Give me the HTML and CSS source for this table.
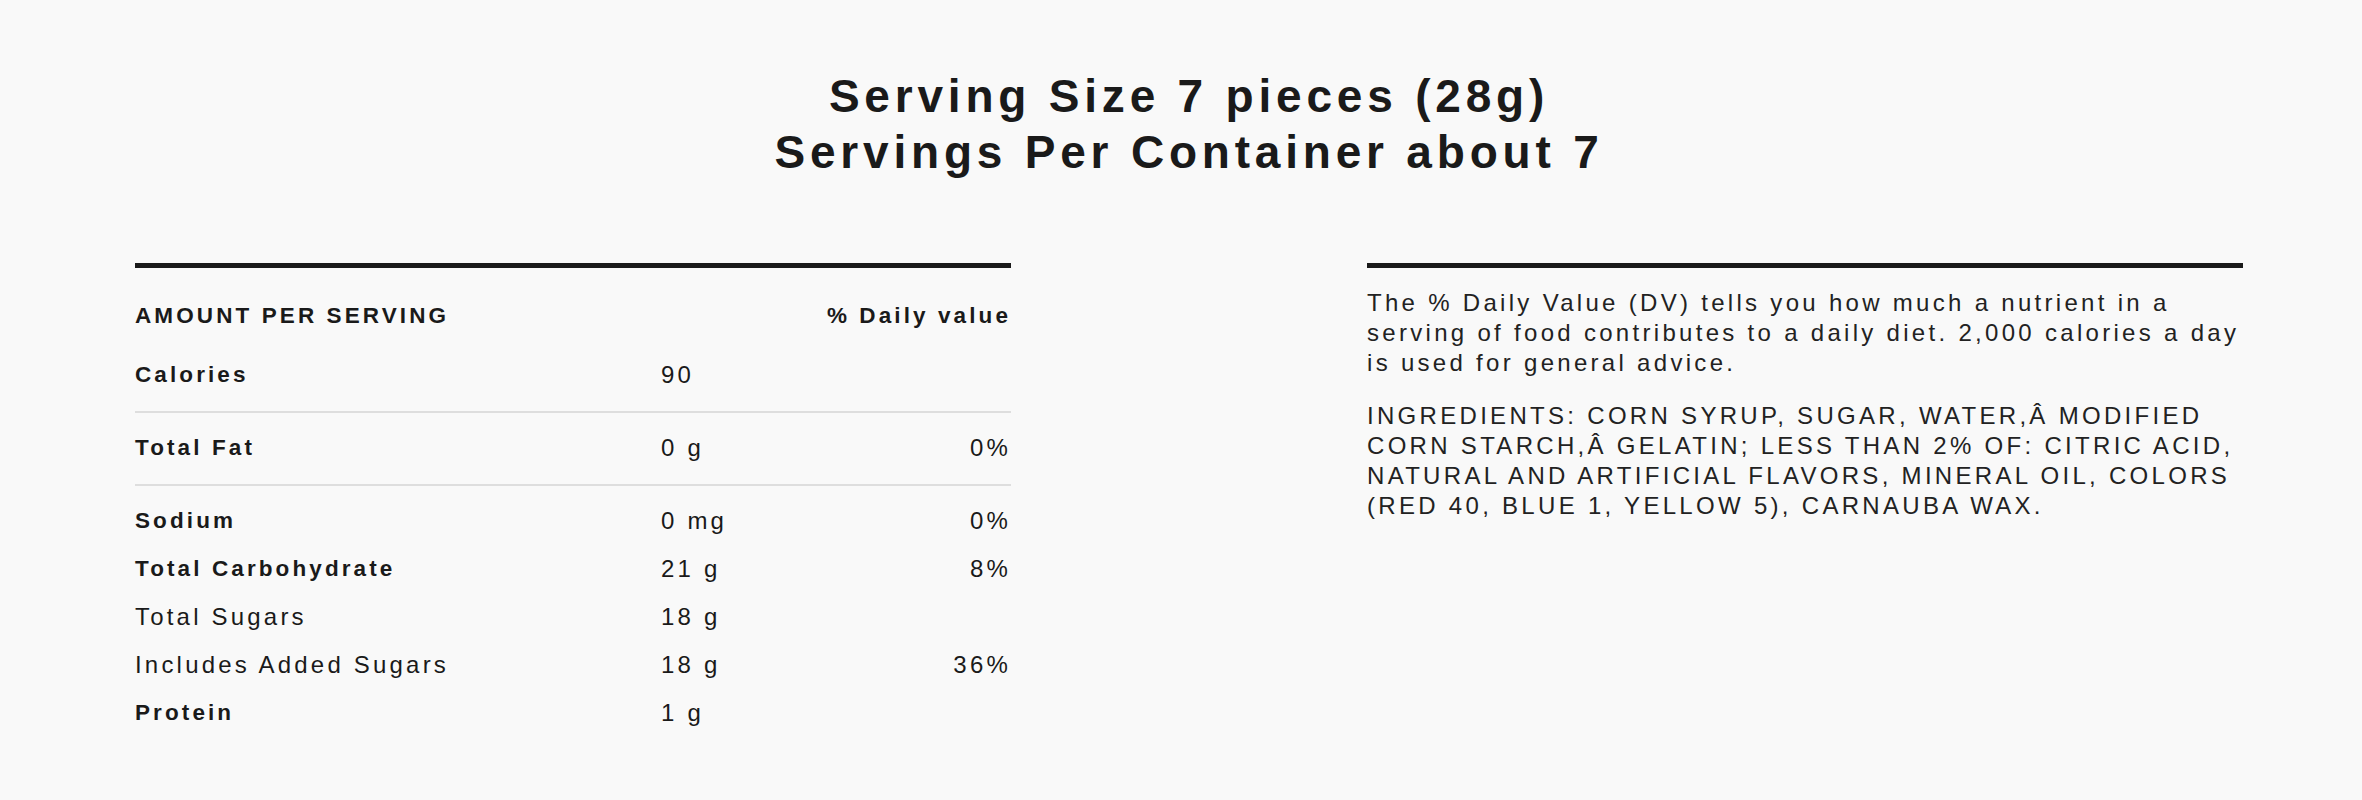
FILE: index.html
```html
<!DOCTYPE html>
<html lang="en">
<head>
<meta charset="utf-8">
<title>Nutrition Facts</title>
<link rel="stylesheet" href="styles.css">
</head>
<body>
<div class="page">
  <h1 class="title">Serving Size 7 pieces (28g)<br>Servings Per Container about 7</h1>
  <div class="columns">
    <section class="facts">
      <div class="row head">
        <span class="label">AMOUNT PER SERVING</span>
        <span class="val"></span>
        <span class="dv">% Daily value</span>
      </div>
      <div class="row divided">
        <span class="label">Calories</span>
        <span class="val">90</span>
        <span class="dv"></span>
      </div>
      <div class="row divided">
        <span class="label">Total Fat</span>
        <span class="val">0 g</span>
        <span class="dv">0%</span>
      </div>
      <div class="row">
        <span class="label">Sodium</span>
        <span class="val">0 mg</span>
        <span class="dv">0%</span>
      </div>
      <div class="row">
        <span class="label">Total Carbohydrate</span>
        <span class="val">21 g</span>
        <span class="dv">8%</span>
      </div>
      <div class="row">
        <span class="label sub">Total Sugars</span>
        <span class="val">18 g</span>
        <span class="dv"></span>
      </div>
      <div class="row">
        <span class="label sub">Includes Added Sugars</span>
        <span class="val">18 g</span>
        <span class="dv">36%</span>
      </div>
      <div class="row">
        <span class="label">Protein</span>
        <span class="val">1 g</span>
        <span class="dv"></span>
      </div>
    </section>
    <section class="notes">
      <p>The % Daily Value (DV) tells you how much a nutrient in a serving of food contributes to a daily diet. 2,000 calories a day is used for general advice.</p>
      <p>INGREDIENTS: CORN SYRUP, SUGAR, WATER,Â MODIFIED CORN STARCH,Â GELATIN; LESS THAN 2% OF: CITRIC ACID, NATURAL AND ARTIFICIAL FLAVORS, MINERAL OIL, COLORS (RED 40, BLUE 1, YELLOW 5), CARNAUBA WAX.</p>
    </section>
  </div>
</div>
</body>
</html>
```
FILE: styles.css
```css
html, body {
  margin: 0;
  padding: 0;
  background: #f9f9f9;
}

body {
  font-family: "Liberation Sans", Arial, sans-serif;
  color: #1a1a1a;
}

.page {
  padding: 68px 119px 40px 135px;
}

.title {
  margin: 0;
  text-align: center;
  font-size: 46px;
  line-height: 56px;
  font-weight: 700;
  letter-spacing: 4.8px;
  color: #1a1a1a;
}

.columns {
  display: grid;
  grid-template-columns: 876px 876px;
  column-gap: 356px;
  margin-top: 83px;
}

.facts {
  border-top: 5px solid #1a1a1a;
  padding-top: 24px;
}

.row {
  display: grid;
  grid-template-columns: 526px 1fr auto;
  align-items: center;
  height: 48px;
  font-size: 24px;
  letter-spacing: 3.2px;
}

.row.head {
  margin-bottom: 11px;
}

.row.divided {
  box-sizing: content-box;
  padding-bottom: 12px;
  margin-bottom: 11px;
  border-bottom: 2px solid #dedede;
}

.label {
  font-weight: 700;
  font-size: 22.5px;
  letter-spacing: 3.1px;
}

.label.sub {
  font-weight: 400;
  font-size: 24px;
  letter-spacing: 3.2px;
}

.row.head .dv {
  font-weight: 700;
  font-size: 22.5px;
  letter-spacing: 3.1px;
}

.dv {
  text-align: right;
}

.notes {
  border-top: 5px solid #1a1a1a;
  padding-top: 20px;
}

.notes p {
  margin: 0 0 23px;
  font-size: 24px;
  line-height: 30px;
  letter-spacing: 3.3px;
  color: #222;
}
```
